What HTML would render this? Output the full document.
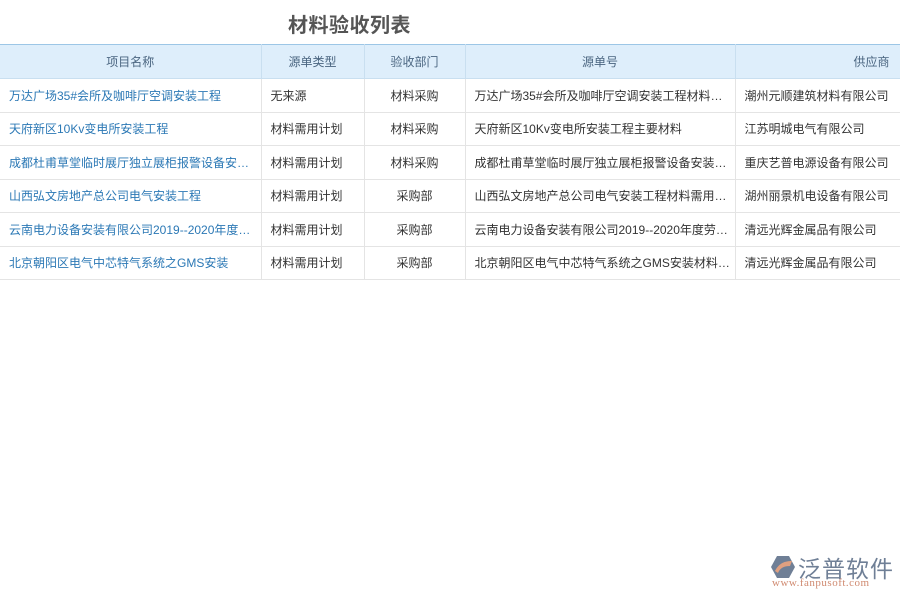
<!DOCTYPE html>
<html><head><meta charset="utf-8"><style>
body{margin:0;width:900px;height:600px;background:#fff;font-family:"Liberation Sans","Noto Sans CJK SC",sans-serif;position:relative;overflow:hidden}
.t{position:absolute;left:288px;top:9px;font-size:20px;font-weight:bold;color:#555;letter-spacing:0.5px}
table{position:absolute;left:0;top:44px;border-collapse:collapse;table-layout:fixed;width:940px;font-size:12px}
th{height:33px;background:#deeefb;color:#4a6580;font-weight:normal;border-top:1px solid #9cc6e6;border-bottom:1px solid #c9dff0;border-right:1px solid #c9dff0;padding:0}
td{height:32.5px;border-bottom:1px solid #e4e4e4;border-right:1px solid #e4e4e4;color:#333;padding:0 9px;white-space:nowrap;overflow:hidden}
td.a{color:#2b78b5}
td.c{text-align:center}
</style></head><body>
<div class="t">材料验收列表</div>
<table>
<colgroup><col style="width:261px"><col style="width:103px"><col style="width:101px"><col style="width:270px"><col style="width:205px"></colgroup>
<tr><th>项目名称</th><th>源单类型</th><th>验收部门</th><th>源单号</th><th style="text-align:left;padding-left:118px">供应商</th></tr>
<tr><td class="a">万达广场35#会所及咖啡厅空调安装工程</td><td>无来源</td><td class="c">材料采购</td><td>万达广场35#会所及咖啡厅空调安装工程材料…</td><td>潮州元顺建筑材料有限公司</td></tr>
<tr><td class="a">天府新区10Kv变电所安装工程</td><td>材料需用计划</td><td class="c">材料采购</td><td>天府新区10Kv变电所安装工程主要材料</td><td>江苏明城电气有限公司</td></tr>
<tr><td class="a">成都杜甫草堂临时展厅独立展柜报警设备安…</td><td>材料需用计划</td><td class="c">材料采购</td><td>成都杜甫草堂临时展厅独立展柜报警设备安装…</td><td>重庆艺普电源设备有限公司</td></tr>
<tr><td class="a">山西弘文房地产总公司电气安装工程</td><td>材料需用计划</td><td class="c">采购部</td><td>山西弘文房地产总公司电气安装工程材料需用…</td><td>湖州丽景机电设备有限公司</td></tr>
<tr><td class="a">云南电力设备安装有限公司2019--2020年度…</td><td>材料需用计划</td><td class="c">采购部</td><td>云南电力设备安装有限公司2019--2020年度劳…</td><td>清远光辉金属品有限公司</td></tr>
<tr><td class="a">北京朝阳区电气中芯特气系统之GMS安装</td><td>材料需用计划</td><td class="c">采购部</td><td>北京朝阳区电气中芯特气系统之GMS安装材料…</td><td>清远光辉金属品有限公司</td></tr>
</table>
<svg style="position:absolute;left:770px;top:555px" width="26" height="24" viewBox="0 0 26 24"><path d="M7 1H19L25 12L19 23H7L1 12Z" fill="#6f7f96"/><path d="M5 16C9 8 15 6 22 6L20 11C14 11 10 13 8 18Z" fill="#e0a080"/></svg>
<div style="position:absolute;left:798px;top:550px;font-size:23px;color:#6f7f96;letter-spacing:1px">泛普软件</div>
<div style="position:absolute;left:772px;top:577px;font-size:11px;color:#d08a70;font-family:'Liberation Serif',serif;letter-spacing:0.5px">www.fanpusoft.com</div>
</body></html>
